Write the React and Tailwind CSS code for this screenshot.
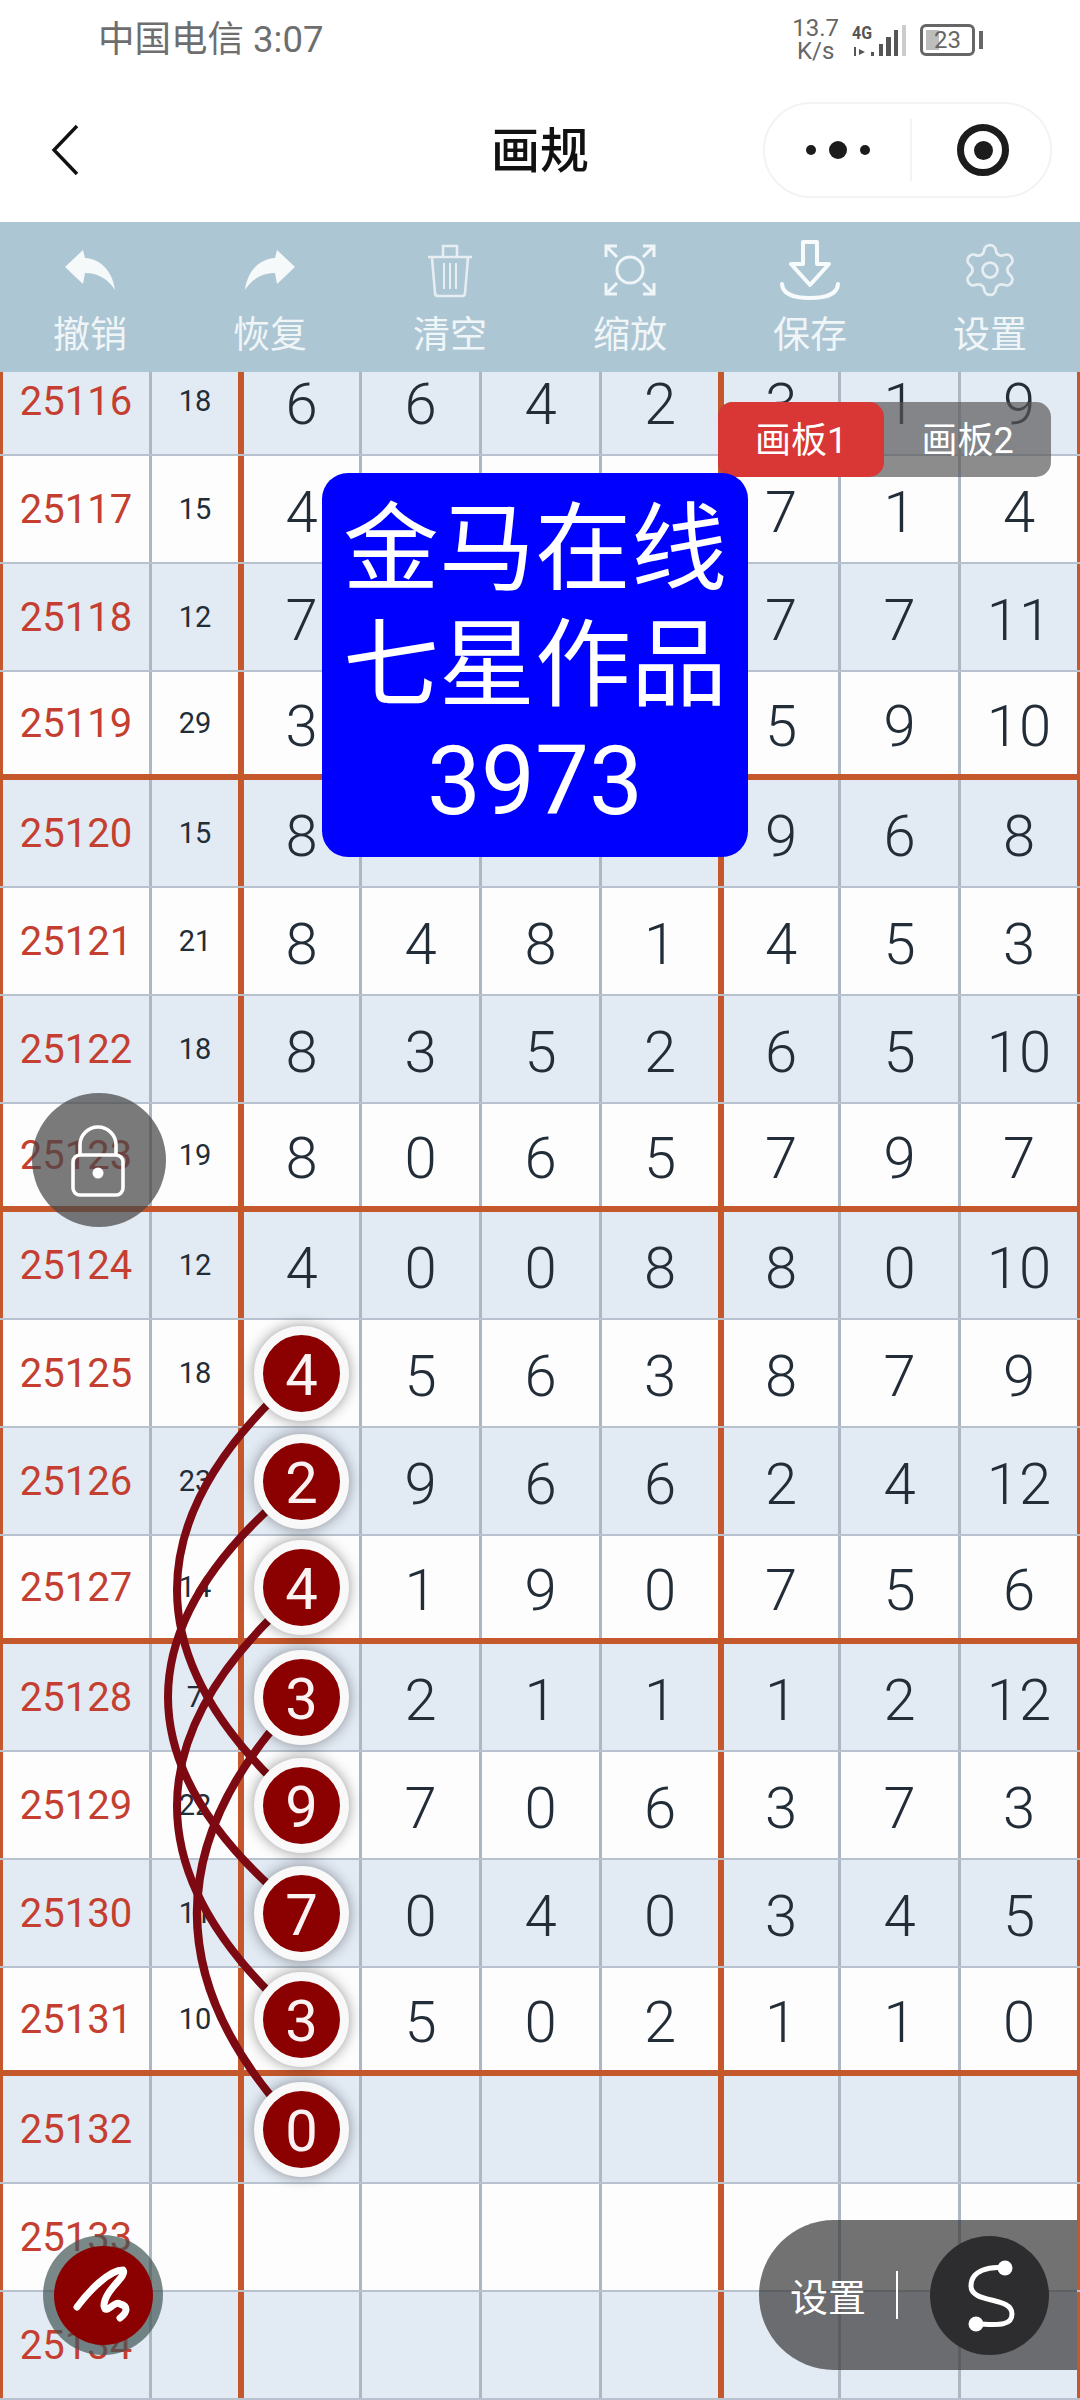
import React from 'react';
import { Settings } from 'lucide-react';

const NUM = { fontFamily: 'Roboto, "Noto Sans CJK SC", sans-serif' };

const rows = [
  ['25116', '18', '6', '6', '4', '2', '3', '1', '9'],
  ['25117', '15', '4', '', '', '', '7', '1', '4'],
  ['25118', '12', '7', '', '', '', '7', '7', '11'],
  ['25119', '29', '3', '', '', '', '5', '9', '10'],
  ['25120', '15', '8', '', '', '', '9', '6', '8'],
  ['25121', '21', '8', '4', '8', '1', '4', '5', '3'],
  ['25122', '18', '8', '3', '5', '2', '6', '5', '10'],
  ['25123', '19', '8', '0', '6', '5', '7', '9', '7'],
  ['25124', '12', '4', '0', '0', '8', '8', '0', '10'],
  ['25125', '18', '*4', '5', '6', '3', '8', '7', '9'],
  ['25126', '23', '*2', '9', '6', '6', '2', '4', '12'],
  ['25127', '14', '*4', '1', '9', '0', '7', '5', '6'],
  ['25128', '7', '*3', '2', '1', '1', '1', '2', '12'],
  ['25129', '22', '*9', '7', '0', '6', '3', '7', '3'],
  ['25130', '11', '*7', '0', '4', '0', '3', '4', '5'],
  ['25131', '10', '*3', '5', '0', '2', '1', '1', '0'],
  ['25132', '', '*0', '', '', '', '', '', ''],
  ['25133', '', '', '', '', '', '', '', ''],
  ['25134', '', '', '', '', '', '', '', ''],
];

function Undo({ flip }) {
  return (
    <svg width="60" height="60" viewBox="0 0 60 60">
      <path
        transform={flip ? 'matrix(-1 0 0 1 60 0)' : undefined}
        d="M5 27 L23 10 L25 18 C42 19 53 33 55 50 C48 39 38 33 25 33 L23 44 Z"
        fill="#f6f9fa"
      />
    </svg>
  );
}

function Trash() {
  return (
    <svg width="60" height="60" viewBox="0 0 60 60" fill="none" stroke="#e6eef1" strokeWidth="2.6" strokeLinejoin="round">
      <path d="M8 17 H52 M23 16 V6 H37 V16" />
      <path d="M12 18 L15 53 Q15 56 18 56 H42 Q45 56 45 53 L48 18" />
      <path d="M24 23 V49 M30 23 V49 M36 23 V49" strokeWidth="2" />
    </svg>
  );
}

function Scale() {
  return (
    <svg width="60" height="60" viewBox="0 0 60 60" fill="none" stroke="#f0f5f7" strokeWidth="3">
      <circle cx="30" cy="30" r="13" />
      <path d="M6 17 V6 H17 M6 6 L17 17 M54 17 V6 H43 M54 6 L43 17 M6 43 V54 H17 M6 54 L17 43 M54 43 V54 H43 M54 54 L43 43" />
    </svg>
  );
}

function Save() {
  return (
    <svg width="60" height="60" viewBox="0 0 60 60" fill="none" stroke="#f8fbfc" strokeWidth="4" strokeLinejoin="round" strokeLinecap="round">
      <path d="M23 2 H37 V24 H49 L30 45 L11 24 H23 Z" />
      <path d="M2 44 Q3 58 30 58 Q57 58 58 44" />
    </svg>
  );
}

const tools = [
  ['撤销', <Undo />],
  ['恢复', <Undo flip />],
  ['清空', <Trash />],
  ['缩放', <Scale />],
  ['保存', <Save />],
  ['设置', <Settings size={60} strokeWidth={1.1} color="#e6eef1" />],
];

function Row({ data, index }) {
  const blue = index % 2 === 0;
  const thick = (index + 1) % 4 === 0 && index < 16;
  return (
    <div
      className={`grid h-[108px] grid-cols-[152px_92px_118px_120px_120px_122px_117px_120px_119px] ${
        thick ? 'border-b-[6px] border-[#c4582c]' : 'border-b-2 border-[#b8c2ce]'
      } ${blue ? 'bg-[#e2eaf4]' : 'bg-[#fdfdfe]'}`}
    >
      {data.map((v, i) => {
        let cls = 'flex items-center justify-center border-r-[3px] border-[#adb7c3]';
        let textCls = 'pt-[6px]';
        if (i === 0) {
          cls += ' border-l-[3px] border-l-[#c4582c] text-[40px] text-[#c43f30]';
          textCls = 'pt-[2px]';
        } else if (i === 1) {
          cls += ' border-r-[6px] border-r-[#c4582c] text-[29px] text-[#222d38]';
          textCls = 'pt-[2px]';
        } else {
          cls += ' text-[58px] font-[350] text-[#222d38]';
        }
        if (i === 5) cls += ' border-r-[6px] border-r-[#c4582c]';
        if (i === 8) cls += ' border-r-[#c4582c]';
        return (
          <div key={i} className={cls} style={NUM}>
            {v.startsWith('*') ? (
              <div className="relative z-20 flex h-[95px] w-[95px] items-center justify-center rounded-full border-[9px] border-[#f9f9f9] bg-[#8b0000] pt-[5px] font-normal text-[#fbf3f3] shadow-[0_0_14px_rgba(0,0,0,0.4)]">
                {v.slice(1)}
              </div>
            ) : (
              <span className={textCls}>{v}</span>
            )}
          </div>
        );
      })}
    </div>
  );
}

export default function App() {
  return (
    <div className="relative h-[2400px] w-[1080px] overflow-hidden bg-white" style={NUM}>
      {/* status bar */}
      <div className="flex h-[74px] items-center justify-between pl-[98px] pr-[97px] pt-[5px]">
        <span className="pt-[2px] text-[36.5px] text-[#6e6e6e]">中国电信 3:07</span>
        <div className="flex items-center gap-[13px] text-[#666]">
          <div className="flex flex-col items-center text-[24px] leading-[23px]">
            <span>13.7</span>
            <span>K/s</span>
          </div>
          <svg width="55" height="36" viewBox="0 0 55 36">
            <text x="0" y="17" fontSize="19" fontWeight="700" fill="#555" fontFamily="Roboto" textLength="20" lengthAdjust="spacingAndGlyphs">4G</text>
            <path d="M2 25 H4 V34 H2 Z M7 27 L13 30 L7 33 Z" fill="#555" />
            <rect x="19" y="30" width="3" height="4" fill="#555" />
            <rect x="27" y="22" width="4" height="12" fill="#555" />
            <rect x="34" y="15" width="5" height="19" fill="#555" />
            <rect x="42" y="8" width="4" height="26" fill="#555" />
            <rect x="50" y="3" width="4" height="31" fill="#ccc" />
          </svg>
          <div className="flex items-center gap-[4px]">
            <div className="relative flex h-[32px] w-[55px] items-center justify-center rounded-[6px] border-[3px] border-[#666] text-[24px]">
              <div className="absolute bottom-[3px] left-[3px] top-[3px] w-[13px] bg-[#bdbdbd]" />
              <span className="relative">23</span>
            </div>
            <div className="h-[18px] w-[4px] bg-[#666]" />
          </div>
        </div>
      </div>

      {/* nav bar */}
      <div className="grid h-[148px] grid-cols-[1fr_auto_1fr] items-center pt-[4px]">
        <div className="pl-[50px]">
          <svg width="30" height="52" viewBox="0 0 30 52" fill="none" stroke="#111" strokeWidth="3.4">
            <path d="M27 2 L4 26 L27 50" />
          </svg>
        </div>
        <span className="pt-[4px] text-[49px] font-medium text-[#111]">画规</span>
        <div className="flex justify-end pr-[28px]">
          <div className="flex h-[96px] w-[289px] items-center rounded-full border-2 border-[#f3f3f3]">
            <div className="flex w-[145px] items-center justify-center gap-[13px]">
              <div className="h-[10px] w-[10px] rounded-full bg-[#1c1c1c]" />
              <div className="h-[18px] w-[18px] rounded-full bg-[#1c1c1c]" />
              <div className="h-[10px] w-[10px] rounded-full bg-[#1c1c1c]" />
            </div>
            <div className="h-[62px] w-[2px] bg-[#f3f3f3]" />
            <div className="flex flex-1 items-center justify-center pl-[4px]">
              <div className="flex h-[52px] w-[52px] items-center justify-center rounded-full border-[7px] border-[#1c1c1c]">
                <div className="h-[19px] w-[19px] rounded-full bg-[#1c1c1c]" />
              </div>
            </div>
          </div>
        </div>
      </div>

      {/* toolbar */}
      <div className="relative z-30 grid h-[150px] grid-cols-6 bg-[#adc6d4] pt-[17px]">
        {tools.map(([label, icon]) => (
          <div key={label} className="flex flex-col items-center">
            <div className="flex h-[62px] items-center justify-center">{icon}</div>
            <span className="mt-[14px] text-[37px] leading-[42px] text-[#f0f5f7]">{label}</span>
          </div>
        ))}
      </div>

      {/* table */}
      <div className="h-[2028px] overflow-hidden">
        <div className="-mt-[24px]">
          {rows.map((r, i) => (
            <Row key={r[0]} data={r} index={i} />
          ))}
        </div>
      </div>

      {/* connecting curves */}
      <svg className="absolute inset-0 z-10" width="1080" height="2400" viewBox="0 0 1080 2400" fill="none" stroke="#7d0a12" strokeWidth="8">
        <path d="M301 1373 Q53 1590 301 1806" />
        <path d="M301 1481 Q35 1697 301 1913" />
        <path d="M301 1590 Q53 1806 301 2022" />
        <path d="M301 1697 Q93 1913 301 2130" />
      </svg>

      {/* board tabs */}
      <div className="absolute left-[718px] top-[402px] z-20 flex h-[75px] w-[333px] rounded-[15px] bg-[rgba(85,85,85,0.68)] pt-0 text-[36px] text-white">
        <div className="flex w-[166px] items-center justify-center rounded-[15px] bg-[#d93636] pt-[2px]">画板1</div>
        <div className="flex flex-1 items-center justify-center pt-[2px]">画板2</div>
      </div>

      {/* blue notice */}
      <div className="absolute left-[322px] top-[473px] z-20 flex h-[384px] w-[426px] flex-col items-center justify-center rounded-[26px] bg-[#0000ff] text-[96px] leading-[116px] text-white">
        <span>金马在线</span>
        <span>七星作品</span>
        <span>3973</span>
      </div>

      {/* lock */}
      <div className="absolute left-[32px] top-[1093px] z-20 h-[134px] w-[134px] rounded-full bg-[rgba(70,70,70,0.72)]">
        <svg width="134" height="134" viewBox="0 0 134 134" fill="none" stroke="#fff" strokeWidth="3.6">
          <rect x="41" y="62" width="50" height="40" rx="7" />
          <path d="M48 62 V52 A18 18 0 0 1 84 52 V62" />
          <circle cx="66" cy="80" r="5.5" fill="#fff" stroke="none" />
        </svg>
      </div>

      {/* pen button */}
      <div className="absolute left-[43px] top-[2235px] z-20 flex h-[120px] w-[120px] items-center justify-center rounded-full bg-[rgba(65,85,85,0.7)]">
        <div className="h-[99px] w-[99px] rounded-full bg-[#8b0000]">
          <svg width="99" height="99" viewBox="0 0 99 99" fill="none" stroke="#fff" strokeWidth="7" strokeLinecap="round" strokeLinejoin="round">
            <path d="M23 61 C35 45 55 24 69 24 C74 30 50 44 50 60 C52 70 60 54 66 58 C74 60 74 66 66 72" />
          </svg>
        </div>
      </div>

      {/* settings pill */}
      <div className="absolute left-[759px] top-[2220px] z-20 flex h-[150px] w-[318px] items-center rounded-l-[75px] bg-[rgba(60,60,60,0.72)] pl-[31px]">
        <span className="pt-[6px] text-[38px] text-white">设置</span>
        <div className="ml-[30px] h-[48px] w-[2px] bg-white" />
        <div className="ml-[32px] h-[119px] w-[119px] rounded-full bg-[#2d2d2f]">
          <svg width="119" height="119" viewBox="0 0 119 119" fill="none" stroke="#fff" strokeWidth="5">
            <path d="M75 32 C60 30 41 34 41 50 C41 68 82 60 82 78 C82 92 62 88 46 88" />
            <circle cx="75" cy="32" r="7.5" fill="#fff" stroke="none" />
            <circle cx="46" cy="88" r="7.5" fill="#fff" stroke="none" />
          </svg>
        </div>
      </div>
    </div>
  );
}
